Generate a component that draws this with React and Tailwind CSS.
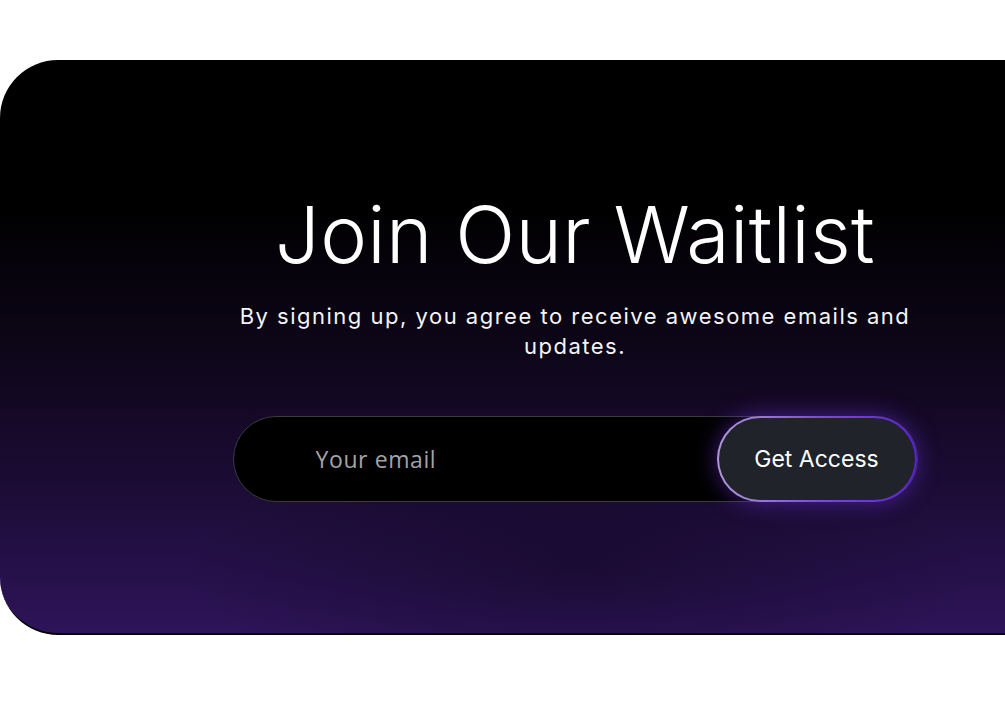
import React, { useState } from 'react';

const App = () => {
    const [email, setEmail] = useState('');

    return (
        <div className="w-screen h-[702px] overflow-hidden bg-white pt-[60px]">
            <section className="relative w-[1150px] h-[575px] rounded-l-[58px] overflow-hidden border-b-2 border-black bg-[linear-gradient(to_bottom,#000000_0%,#000000_25%,#0d0618_50%,#1c0c36_75%,#2e1459_100%)]">
                {/* dark haze under the form */}
                <div className="absolute left-[180px] top-[380px] w-[800px] h-[260px] rounded-full bg-[radial-gradient(closest-side,rgba(10,4,20,0.4),rgba(10,4,20,0))]" />

                <div className="relative flex flex-col items-center pt-[132px] font-['Inter',sans-serif] text-white">
                    <h1 className="text-[79px] leading-[84px] font-light tracking-[0.3px]">Join Our Waitlist</h1>
                    <p className="mt-[25px] w-[720px] text-center text-[22px] leading-[30px] tracking-[1.5px] text-gray-100">
                        By signing up, you agree to receive awesome emails and updates.
                    </p>

                    <form
                        onSubmit={(e) => e.preventDefault()}
                        className="mt-[55px] w-[685px] h-[86px] flex items-center rounded-full border border-[#3b3b40] bg-black"
                    >
                        <input
                            type="email"
                            value={email}
                            onChange={(e) => setEmail(e.target.value)}
                            placeholder="Your email"
                            className="flex-1 h-full bg-transparent pl-[82px] text-[23px] tracking-[0.6px] font-['Open_Sans',sans-serif] text-white placeholder:text-[#a3a3a8] outline-none"
                        />
                        <div className="h-[86px] w-[200px] rounded-full p-[2px] bg-[linear-gradient(to_right,#b197d9,#7c4fd0_50%,#5b21d6)] shadow-[0_0_22px_rgba(110,50,220,0.55)]">
                            <button
                                type="submit"
                                className="w-full h-full rounded-full bg-[#202329] text-[23px] text-white"
                            >
                                Get Access
                            </button>
                        </div>
                    </form>
                </div>
            </section>
        </div>
    );
};

export default App;
